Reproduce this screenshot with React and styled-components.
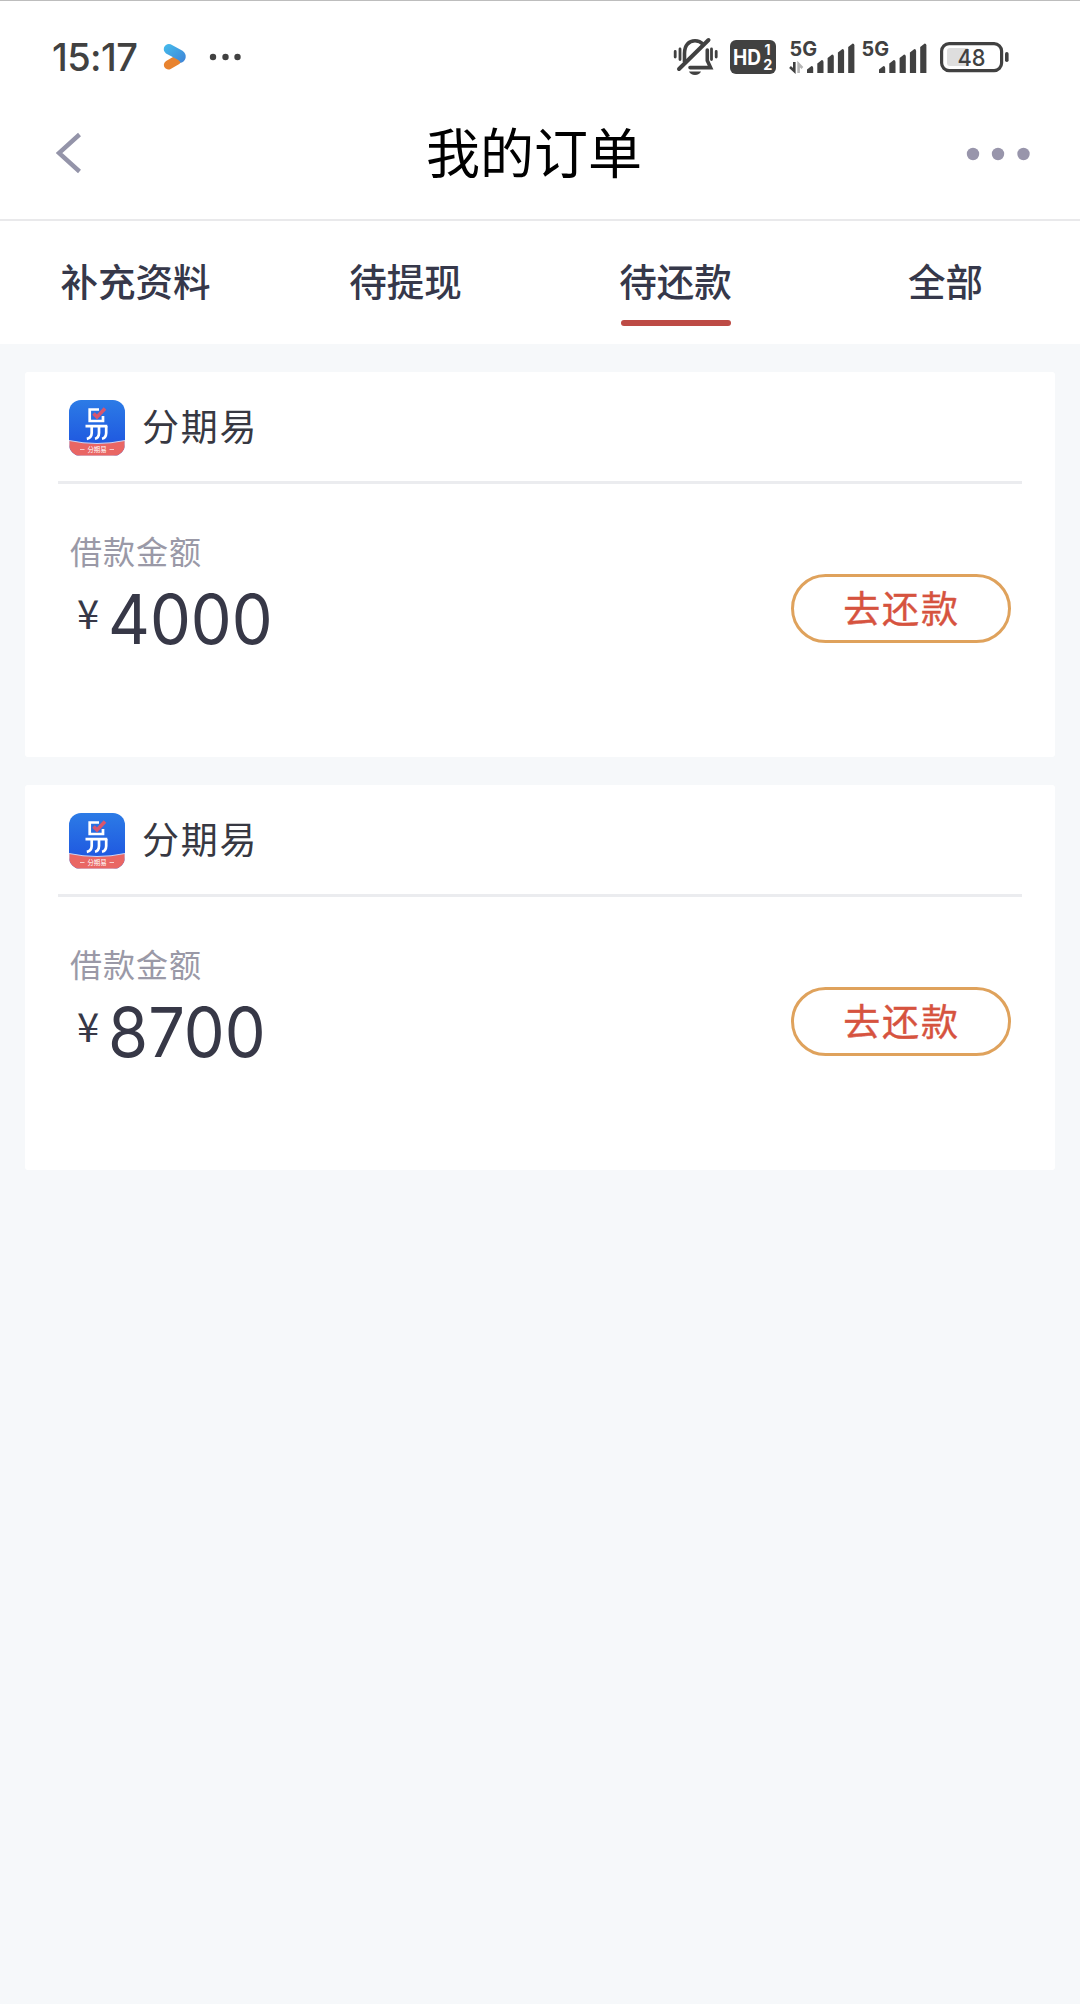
import React from 'react';
import styled, { createGlobalStyle } from 'styled-components';

const GlobalStyle = createGlobalStyle`
  * {
    box-sizing: border-box;
  }

  body {
    margin: 0;
    background-color: #f6f8fa;
    font-family: 'Inter', 'Noto Sans CJK SC', sans-serif;
  }
`;

const Page = styled.div`
  min-height: 2004px;
  display: flex;
  flex-direction: column;
  background-color: #f6f8fa;
`;

const StatusBar = styled.div`
  height: 88px;
  padding: 25px 71px 0 52px;
  display: flex;
  justify-content: space-between;
  align-items: flex-start;
  background-color: #ffffff;
  border-top: 1px solid #bdbdbd;
`;

const StatusGroup = styled.div`
  height: 62px;
  display: flex;
  align-items: center;
`;

const Clock = styled.span`
  width: 111px;
  font-size: 38px;
  font-weight: 500;
  letter-spacing: -0.6px;
  color: #414141;
`;

const StatusIcon = styled.svg`
  display: block;
  margin-left: ${(props) => props.$gap || 0}px;
`;

const Header = styled.header`
  height: 133px;
  padding: 0 50px 2px 56px;
  display: flex;
  align-items: center;
  justify-content: space-between;
  background-color: #ffffff;
  border-bottom: 2px solid #e9e9eb;
`;

const HeaderTitle = styled.h1`
  margin: 0;
  padding: 0 18px 3px 0;
  font-family: 'Noto Sans CJK SC', sans-serif;
  font-size: 54px;
  font-weight: 400;
  line-height: 60px;
  color: #000000;
`;

const HeaderSide = styled.div`
  width: 66px;
  padding-top: ${(props) => (props.$right ? 2 : 0)}px;
  display: flex;
  justify-content: ${(props) => (props.$right ? 'flex-end' : 'flex-start')};
`;

const Tabs = styled.nav`
  height: 123px;
  display: grid;
  grid-template-columns: repeat(4, 1fr);
  background-color: #ffffff;
`;

const Tab = styled.div`
  padding: 31px 0 0 1px;
  display: flex;
  flex-direction: column;
  align-items: center;
  gap: 12px;
  font-family: 'Noto Sans CJK SC', sans-serif;
  font-size: 37.5px;
  font-weight: 500;
  line-height: 56px;
  color: #36384a;

  &::after {
    content: '';
    width: 110px;
    height: 6px;
    border-radius: 3px;
    background-color: ${(props) => (props.$active ? '#bd4b45' : 'transparent')};
  }
`;

const OrderList = styled.main`
  padding: 28px 25px;
  display: flex;
  flex-direction: column;
  gap: 28px;
`;

const OrderCard = styled.section`
  height: 385px;
  padding: 0 33px;
  background-color: #ffffff;
  border-radius: 3px;
`;

const CardHead = styled.div`
  height: 112px;
  padding: 2px 0 0 11px;
  display: flex;
  align-items: center;
  gap: 17px;
  border-bottom: 3px solid #ebecef;
`;

const ProductName = styled.span`
  padding-bottom: 5px;
  font-family: 'Noto Sans CJK SC', sans-serif;
  font-size: 37px;
  letter-spacing: 1.8px;
  line-height: 54px;
  color: #373842;
`;

const CardBody = styled.div`
  padding: 43px 11px 0 12px;
  display: flex;
  justify-content: space-between;
  align-items: flex-start;
`;

const Label = styled.div`
  font-family: 'Noto Sans CJK SC', sans-serif;
  font-size: 32px;
  letter-spacing: 1px;
  line-height: 46px;
  color: #9a99a7;
`;

const Amount = styled.div`
  padding-left: 7px;
  display: flex;
  align-items: flex-start;
  color: #373847;
`;

const Currency = styled.span`
  width: 31px;
  padding-top: 19px;
  font-family: 'Noto Sans CJK SC', sans-serif;
  font-size: 40px;
  line-height: 40px;
`;

const Figure = styled.span`
  padding-top: 11px;
  font-size: 69px;
  line-height: 70px;
  transform: scaleX(0.94);
  transform-origin: left;
`;

const RepayButton = styled.button`
  width: 220px;
  height: 69px;
  margin-top: 47px;
  padding: 0 0 4px 1px;
  font-family: 'Noto Sans CJK SC', sans-serif;
  font-size: 37px;
  letter-spacing: 1.8px;
  line-height: 54px;
  color: #d6533f;
  -webkit-text-stroke: 0.4px #d6533f;
  background-color: #ffffff;
  border: 3px solid #dfa25c;
  border-radius: 35px;
`;

const tabs = ['补充资料', '待提现', '待还款', '全部'];

const orders = [
  { id: 1, name: '分期易', amount: '4000' },
  { id: 2, name: '分期易', amount: '8700' },
];

const VideoAppIcon = () => (
  <StatusIcon width="24" height="28" viewBox="0 0 24 28">
    <defs>
      <linearGradient id="playBlue" x1="0" y1="0" x2="1" y2="1">
        <stop offset="0" stopColor="#45bdec" />
        <stop offset="1" stopColor="#3f82d6" />
      </linearGradient>
    </defs>
    <path d="M5.4 22 L14 17" stroke="#e8832f" strokeWidth="9" strokeLinecap="round" />
    <path
      d="M7.6 1.2 L19.5 7.8 Q23.4 10.5 22.6 15 Q21.5 19 17.5 20 Q17 17.6 13 15.8 L3 10.4 Q0 8 1 4.6 Q3 0 7.6 1.2 Z"
      fill="url(#playBlue)"
    />
  </StatusIcon>
);

const MoreIcon = () => (
  <StatusIcon $gap={22} width="34" height="8" viewBox="0 0 34 8">
    <g fill="#414141">
      <circle cx="4" cy="4" r="3.2" />
      <circle cx="16.5" cy="4" r="3.2" />
      <circle cx="28.5" cy="4" r="3.2" />
    </g>
  </StatusIcon>
);

const MuteIcon = () => (
  <StatusIcon width="46" height="40" viewBox="0 0 46 40">
    <g fill="none" stroke="#414141" strokeLinecap="round">
      <path d="M11.5 25 V16.5 C11.5 8 16 3.8 22 3.8 C25 3.8 28 5 29.8 7" strokeWidth="3.6" strokeLinecap="butt" />
      <path d="M34.3 13 V23.5 L37.6 30.6 H17" strokeWidth="3.6" />
      <path d="M6 32 L35.5 3" strokeWidth="4" />
      <path d="M2.2 14.5 V20 M7 12 V22.5 M38.5 12 V22.5 M43.2 14.5 V20" strokeWidth="2.8" />
    </g>
    <path d="M16 34.6 H28 Q26.5 38 22 38 Q17.5 38 16 34.6 Z" fill="#414141" />
  </StatusIcon>
);

const HdIcon = () => (
  <StatusIcon $gap={11} width="46" height="34" viewBox="0 0 46 34">
    <rect width="46" height="34" rx="6" fill="#414141" />
    <g fill="#ffffff" fontFamily="Inter, sans-serif" fontWeight="700">
      <text x="3" y="24.5" fontSize="21" textLength="28" lengthAdjust="spacingAndGlyphs">HD</text>
      <text x="34.5" y="15" fontSize="14">1</text>
      <text x="33.2" y="29.8" fontSize="14.5">2</text>
    </g>
  </StatusIcon>
);

const bars = [
  { x: 18, h: 7 },
  { x: 28.3, h: 13 },
  { x: 38.6, h: 18.5 },
  { x: 48.9, h: 24 },
  { x: 59.2, h: 29.5 },
];

const SignalIcon = ({ gap, data }) => (
  <StatusIcon $gap={gap} width="66" height="46" viewBox="0 -6 66 46">
    <text
      x="0.5"
      y="15.5"
      fill="#414141"
      fontFamily="Inter, sans-serif"
      fontSize="20"
      fontWeight="700"
      textLength="27.5"
      lengthAdjust="spacingAndGlyphs"
    >
      5G
    </text>
    {bars.map((bar) => (
      <path
        key={bar.x}
        d={`M${bar.x} 33 V${36.5 - bar.h} L${bar.x + 4.5} ${33 - bar.h} Q${bar.x + 6.2} ${33 - bar.h} ${bar.x + 6.2} ${35 - bar.h} V33 Z`}
        fill="#414141"
      />
    ))}
    {data && (
      <>
        <path d="M5.3 22 V31 L1 27" fill="none" stroke="#414141" strokeWidth="2.6" />
        <path d="M9.6 33 V24 L13.4 28" fill="none" stroke="#b5b5b5" strokeWidth="2.6" />
      </>
    )}
  </StatusIcon>
);

const BatteryIcon = () => (
  <StatusIcon $gap={13} width="69" height="32" viewBox="0 0 69 32">
    <rect x="1.6" y="2.6" width="60" height="27" rx="7.5" fill="none" stroke="#414141" strokeWidth="3.2" />
    <path d="M10 7 H28 V25 H10 Q7 25 7 22 V10 Q7 7 10 7 Z" fill="#dedede" />
    <rect x="65" y="11" width="3.6" height="10" rx="1.8" fill="#414141" />
    <text
      x="31.5"
      y="24.5"
      fill="#414141"
      fontFamily="Inter, sans-serif"
      fontSize="23.5"
      fontWeight="500"
      textAnchor="middle"
      textLength="28"
      lengthAdjust="spacingAndGlyphs"
    >
      48
    </text>
  </StatusIcon>
);

const BackIcon = () => (
  <svg width="26" height="42" viewBox="0 0 26 42">
    <path d="M23.5 2.5 L3 21 L23.5 39.5" fill="none" stroke="#9494a9" strokeWidth="4.4" />
  </svg>
);

const MenuIcon = () => (
  <svg width="64" height="14" viewBox="0 0 64 14">
    <g fill="#9895ab">
      <circle cx="7" cy="7" r="6.2" />
      <circle cx="32" cy="7" r="6.2" />
      <circle cx="57.5" cy="7" r="6.2" />
    </g>
  </svg>
);

const ProductLogo = () => (
  <svg width="56" height="56" viewBox="0 0 56 56">
    <defs>
      <linearGradient id="logoBlue" x1="0" y1="0" x2="0" y2="1">
        <stop offset="0" stopColor="#2c7be6" />
        <stop offset="0.8" stopColor="#1f58e0" />
      </linearGradient>
      <clipPath id="logoShape">
        <rect width="56" height="56" rx="12" />
      </clipPath>
    </defs>
    <g clipPath="url(#logoShape)">
      <rect width="56" height="56" fill="url(#logoBlue)" />
      <path d="M0 40.5 Q28 46.5 56 40.5 V56 H0 Z" fill="#e96664" stroke="#ccd4f5" strokeWidth="1" />
      <g fill="none" stroke="#ffffff" strokeWidth="2.7">
        <path d="M30 9.5 H20.7 V21 H34 V16" />
        <path d="M16.5 26.2 H38.3" />
        <path d="M22.7 26 V33 Q22.5 38 17.8 38.8" />
        <path d="M30 26 V33 Q29.8 38 26 38.8" />
        <path d="M37.2 26 V33 Q37 38 33 38.8" />
      </g>
      <path d="M24.5 13.5 L28 17 L36 8.5" fill="none" stroke="#d8566e" strokeWidth="3.6" />
      <path d="M11 49.5 H15.5 M40.5 49.5 H45" stroke="#f8caca" strokeWidth="1" />
      <text
        x="28"
        y="52"
        fill="#ffffff"
        fontFamily="'Noto Sans CJK SC', sans-serif"
        fontSize="6.4"
        textAnchor="middle"
      >
        分期易
      </text>
    </g>
  </svg>
);

const Order = ({ name, amount }) => (
  <OrderCard>
    <CardHead>
      <ProductLogo />
      <ProductName>{name}</ProductName>
    </CardHead>
    <CardBody>
      <div>
        <Label>借款金额</Label>
        <Amount>
          <Currency>¥</Currency>
          <Figure>{amount}</Figure>
        </Amount>
      </div>
      <RepayButton>去还款</RepayButton>
    </CardBody>
  </OrderCard>
);

const App = () => {
  return (
    <Page>
      <GlobalStyle />
      <StatusBar>
        <StatusGroup>
          <Clock>15:17</Clock>
          <VideoAppIcon />
          <MoreIcon />
        </StatusGroup>
        <StatusGroup>
          <MuteIcon />
          <HdIcon />
          <SignalIcon gap={13} data />
          <SignalIcon gap={6} />
          <BatteryIcon />
        </StatusGroup>
      </StatusBar>
      <Header>
        <HeaderSide>
          <BackIcon />
        </HeaderSide>
        <HeaderTitle>我的订单</HeaderTitle>
        <HeaderSide $right>
          <MenuIcon />
        </HeaderSide>
      </Header>
      <Tabs>
        {tabs.map((tab) => (
          <Tab key={tab} $active={tab === '待还款'}>
            {tab}
          </Tab>
        ))}
      </Tabs>
      <OrderList>
        {orders.map((order) => (
          <Order key={order.id} name={order.name} amount={order.amount} />
        ))}
      </OrderList>
    </Page>
  );
};

export default App;
